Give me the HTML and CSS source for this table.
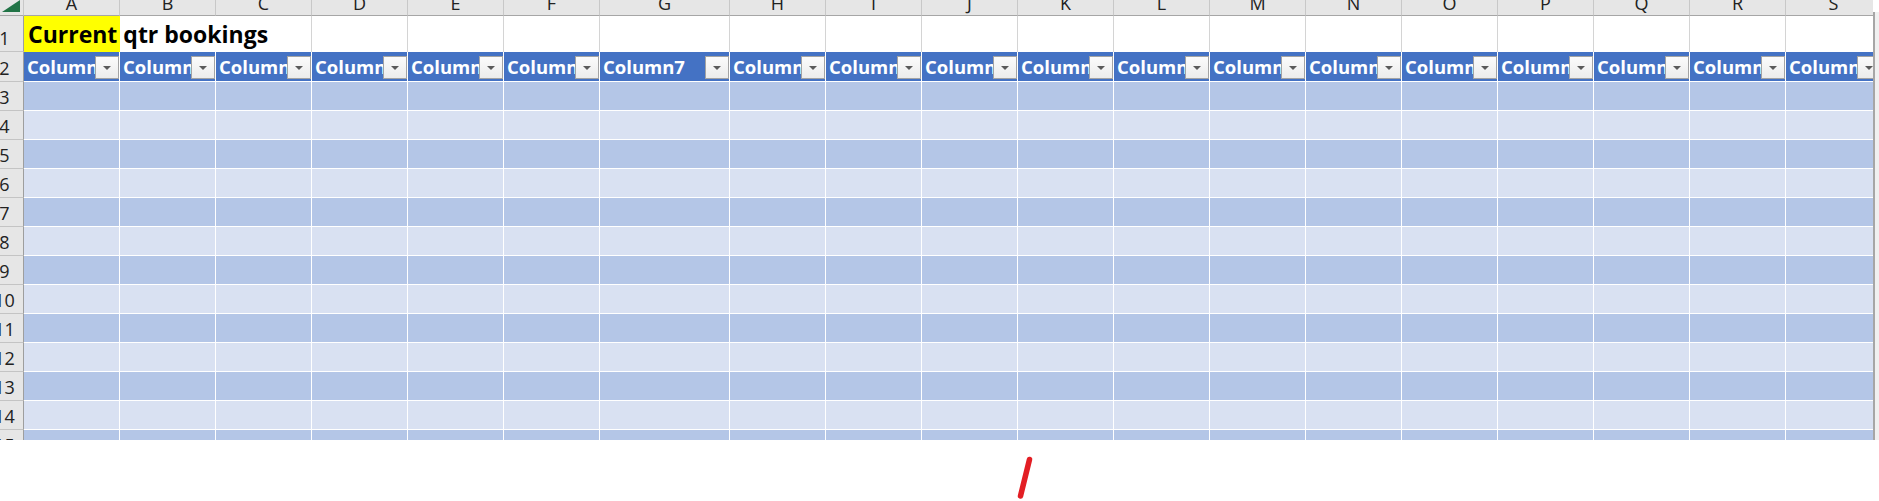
FILE: index.html
```html
<!DOCTYPE html>
<html lang="en">
<head>
    <meta charset="UTF-8">
    <meta name="viewport" content="width=device-width, initial-scale=1.0">
    <title>Current qtr bookings</title>
    <link rel="stylesheet" href="styles.css">
</head>
<body>

    <div class="sheet">
        <div class="grid" id="grid"></div>
        <div class="vscroll"></div>
    </div>

    <div class="below">
        <svg class="mark" width="30" height="50" viewBox="0 0 30 50">
            <line x1="19.5" y1="9.5" x2="10.5" y2="46" stroke="#e31e24" stroke-width="5.5" stroke-linecap="round"/>
        </svg>
    </div>

    <script>
        const letters = 'ABCDEFGHIJKLMNOPQRS'.split('');
        const grid = document.getElementById('grid');

        function makeRow(rowClass, label) {
            const row = document.createElement('div');
            row.className = 'row ' + rowClass;
            const head = document.createElement('div');
            head.className = 'rowhead';
            if (label) {
                const num = document.createElement('span');
                num.textContent = label;
                head.appendChild(num);
            }
            row.appendChild(head);
            grid.appendChild(row);
            return row;
        }

        function makeCell(row, cls, col) {
            const cell = document.createElement('div');
            cell.className = 'cell ' + cls;
            if (col === 'G') cell.classList.add('wide'); // la columna G es mas ancha
            row.appendChild(cell);
            return cell;
        }

        // Fila de letras
        const letterRow = makeRow('colheads', '');
        letterRow.firstChild.className = 'corner';
        letterRow.firstChild.innerHTML = '<svg width="23" height="15" viewBox="0 0 23 15"><polygon points="20,0 20,12 2,12" fill="#217346"/></svg>';
        letters.forEach(l => {
            const cell = makeCell(letterRow, 'colhead', l);
            cell.innerHTML = '<span>' + l + '</span>';
        });

        // Fila 1: titulo
        const titleRow = makeRow('titlerow', '1');
        letters.forEach((l, i) => {
            const cell = makeCell(titleRow, i === 0 ? 'title' : (i === 1 ? 'spill' : 'blank'), l);
            if (i === 0) cell.innerHTML = '<span>Current qtr bookings</span>';
        });

        // Fila 2: encabezados de tabla
        const headerRow = makeRow('headrow', '2');
        letters.forEach((l, i) => {
            const cell = makeCell(headerRow, 'th', l);
            cell.innerHTML = '<span class="label">Column' + (i + 1) + '</span><div class="filter"><i></i></div>';
        });

        // Filas de datos con bandas
        for (let r = 3; r <= 15; r++) {
            const row = makeRow('datarow', String(r));
            letters.forEach(l => makeCell(row, r % 2 ? 'band1' : 'band2', l));
        }
    </script>
</body>
</html>
```

FILE: styles.css
```css
* {
    box-sizing: border-box;
}

body {
    margin: 0;
    background: #fff;
    font-family: "Open Sans", Arial, sans-serif;
    color: #222;
}

.sheet {
    display: flex;
    height: 440px;
    overflow: hidden;
}

.grid {
    width: 1873px;
    flex: none;
    overflow: hidden;
}

.vscroll {
    flex: 1;
    margin-top: 12px;
    border-left: 2px solid #a6a6a6;
    background: #f0f0f0;
}

.row {
    display: flex;
}

.rowhead {
    width: 24px;
    flex: none;
    display: flex;
    align-items: flex-end;
    overflow: hidden;
    background: #e6e6e6;
    border-right: 1px solid #9e9e9e;
    border-bottom: 1px solid #c4c4c4;
}

.rowhead span {
    flex: none;
    width: 41px;
    margin-left: -16px;
    padding-bottom: 4px;
    text-align: center;
    font-size: 18px;
    line-height: 18px;
}

.corner {
    width: 24px;
    flex: none;
    background: #e6e6e6;
    border-right: 1px solid #c8c8c8;
    border-bottom: 1px solid #a6a6a6;
}

.corner svg {
    display: block;
}

.cell {
    width: 96px;
    flex: none;
    border-right: 1px solid #d4d4d4;
}

.cell.wide {
    width: 130px;
}

/* letras de columna */
.colheads {
    height: 16px;
}

.colhead {
    overflow: hidden;
    background: #e6e6e6;
    border-right-color: #c8c8c8;
    border-bottom: 1px solid #a6a6a6;
    text-align: center;
    font-size: 18px;
    line-height: 6px;
}

/* fila del titulo */
.titlerow {
    height: 36px;
}

.title {
    display: flex;
    align-items: flex-end;
    background: #ffff00;
    border-right-color: #ffff00;
    padding: 0 0 6px 4px;
    white-space: nowrap;
    font-size: 23px;
    line-height: 23px;
    font-weight: bold;
    color: #000;
}

.spill {
    border-right: none;
}

/* encabezado de la tabla */
.headrow {
    height: 30px;
}

.th {
    display: flex;
    background: #4472c4;
    border-right-color: #fff;
    border-bottom: 1px solid #fff;
    color: #fff;
    font-size: 18.5px;
    font-weight: bold;
}

.th .label {
    flex: 1;
    overflow: hidden;
    white-space: nowrap;
    padding-left: 3px;
    line-height: 29px;
}

.filter {
    flex: none;
    width: 24px;
    height: 23px;
    margin-top: 4px;
    display: flex;
    justify-content: center;
    align-items: center;
    background: linear-gradient(#fbfbfb, #ececec);
    border: 1px solid #a3a3a3;
}

.filter i {
    width: 0;
    height: 0;
    border-left: 4px solid transparent;
    border-right: 4px solid transparent;
    border-top: 4px solid #5a5a5a;
}

/* filas de datos */
.datarow {
    height: 29px;
}

.band1,
.band2 {
    border-right-color: #fff;
    border-bottom: 1px solid #fff;
}

.band1 {
    background: #b4c6e7;
}

.band2 {
    background: #d9e1f2;
}

.below {
    height: 61px;
    padding: 10px 0 0 1010px;
}

.mark {
    display: block;
}
```
